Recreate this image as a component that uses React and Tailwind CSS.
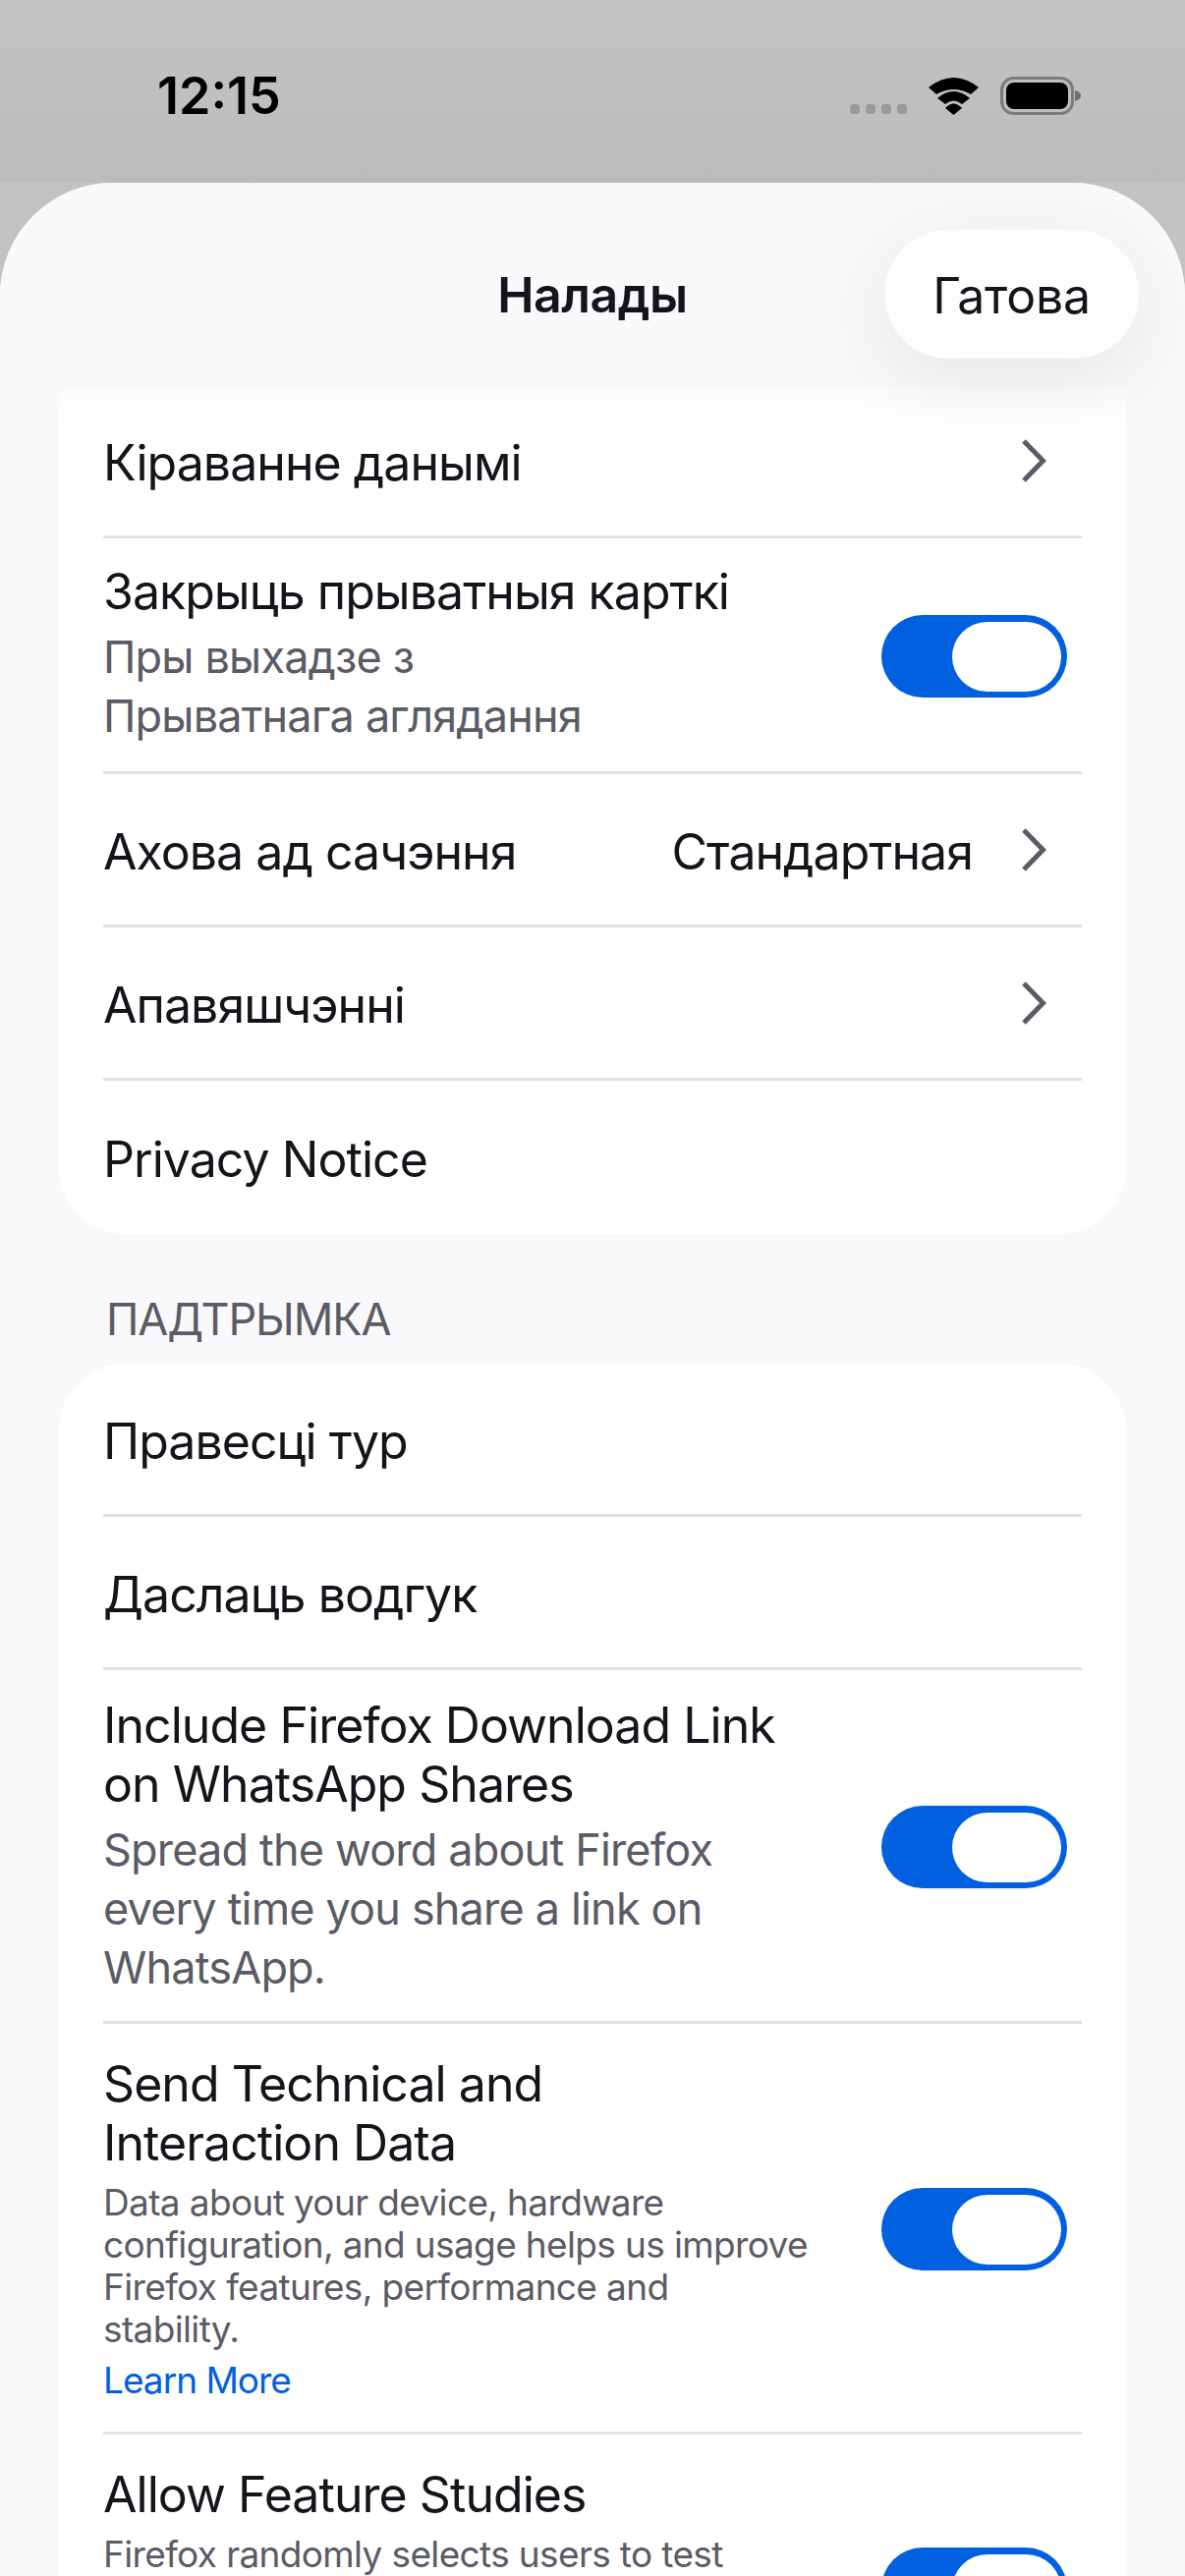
function Toggle() {
  return (
    <div className="shrink-0 w-[189px] h-[84px] rounded-full bg-[#0060df] flex items-center justify-end pr-[6px]">
      <div className="w-[111px] h-[71px] rounded-full bg-white" />
    </div>
  );
}

function Chevron() {
  return (
    <svg className="shrink-0" width="28" height="46" viewBox="0 0 28 46" fill="none">
      <path d="M5 3 L24.5 23 L5 43" stroke="#5b5b66" strokeWidth="5" />
    </svg>
  );
}

function Row({ title, value, chevron, last, className }) {
  return (
    <div className={`ml-[45px] mr-[45px] flex items-center justify-between ${last ? '' : 'border-b-[3px] border-[#e0e0e6]'} ${className || 'h-[156px]'}`}>
      <span className="pt-[4px] text-[50px] leading-[60px] tracking-[-0.95px] text-[#15141a]">{title}</span>
      <div className="flex items-center gap-[47px] pr-[36px]">
        {value && <span className="pt-[4px] text-[50px] leading-[60px] tracking-[-0.95px] text-[#15141a]">{value}</span>}
        {chevron && <Chevron />}
      </div>
    </div>
  );
}

function ToggleRow({ title, sub, small, link, h, pt, togglePos, clip }) {
  return (
    <div className={`ml-[45px] mr-[45px] flex justify-between ${clip ? '' : 'border-b-[3px] border-[#e0e0e6]'} ${h} ${pt}`}>
      <div className="w-[760px]">
        <div className="text-[50px] leading-[60px] tracking-[-0.95px] text-[#15141a]">{title}</div>
        {small ? (
          <div className="mt-[9px] text-[37px] leading-[43px] tracking-[-0.64px] text-[#5b5b66]">{sub}</div>
        ) : (
          <div className="mt-[7px] text-[45px] leading-[60px] tracking-[-0.82px] text-[#5b5b66]">{sub}</div>
        )}
        {link && <div className="mt-[9px] text-[37px] leading-[43px] tracking-[-1px] text-[#0060df]">{link}</div>}
      </div>
      <div className={`mr-[15px] ${togglePos}`}>
        <Toggle />
      </div>
    </div>
  );
}

export default function App() {
  return (
    <div className="relative w-[1206px] h-[2622px] overflow-hidden bg-[#c2c2c4] font-['Inter','Liberation_Sans',sans-serif]">
      {/* status bar */}
      <div className="h-[186px] px-[160px] pt-[67px] flex justify-between bg-gradient-to-b from-[#c3c3c5] to-[#bcbcbe]">
        <span className="text-[52px] leading-[62px] font-semibold text-black">12:15</span>
        <svg className="mr-[-59px] mt-[9px]" width="240" height="44" viewBox="0 0 240 44">
          <g fill="#9a9a9c">
            <rect x="0" y="30" width="10" height="10" rx="3.5" />
            <rect x="16" y="30" width="10" height="10" rx="3.5" />
            <rect x="32" y="30" width="10" height="10" rx="3.5" />
            <rect x="48" y="30" width="10" height="10" rx="3.5" />
          </g>
          <path d="M80 13 Q105.5 -7 131 13 L123 20 Q105.5 10 88 20 Z" fill="#000" />
          <path d="M89 24 Q105.5 10 122 24 L114 30 Q105.5 23 97 30 Z" fill="#000" />
          <path d="M97 34 Q105.5 25 114 34 L105.5 41 Z" fill="#000" />
          <rect x="154.5" y="3.5" width="72" height="36" rx="12" fill="none" stroke="#7c7c7e" strokeWidth="3" />
          <rect x="159" y="8" width="63" height="27" rx="8" fill="#000" />
          <path d="M229 16 C233 17 235 19 235 21.5 C235 24 233 26 229 27 Z" fill="#6f6f71" />
        </svg>
      </div>

      {/* sheet */}
      <div className="relative h-[2436px] rounded-t-[115px] bg-[#f9f9fb] overflow-hidden">
        <div className="absolute top-0 left-0 right-0 h-[210px] z-10 bg-[#f9f9fb] flex items-center justify-center pt-[18px]">
          <div className="absolute top-full left-0 right-0 h-[40px] bg-gradient-to-b from-[#f9f9fb99] to-[#f9f9fb00]" />
          <span className="text-[50px] leading-[60px] font-semibold tracking-[-0.5px] text-[#15141a]">Налады</span>
          <div className="absolute right-[47px] top-[48px] w-[259px] h-[131px] rounded-full bg-[#fdfdfe] shadow-[0_20px_80px_rgba(0,0,0,0.08)] flex items-center justify-center">
            <span className="pt-[2px] text-[50px] leading-[60px] tracking-[-0.3px] text-[#15141a]">Гатова</span>
          </div>
        </div>

        <div className="pt-[210px] px-[60px]">
          <div className="bg-white rounded-b-[68px] w-[1086px]">
            <Row title="Кіраванне данымі" chevron className="h-[152px] pb-[3px]" />
            <ToggleRow
              title="Закрыць прыватныя карткі"
              sub={<>Пры выхадзе з<br />Прыватнага аглядання</>}
              h="h-[240px]"
              pt="pt-[24px]"
              togglePos="mt-[54px]"
            />
            <Row title="Ахова ад сачэння" value="Стандартная" chevron />
            <Row title="Апавяшчэнні" chevron />
            <Row title="Privacy Notice" last />
          </div>

          <div className="h-[132px] pl-[48px] pt-[60px] text-[45px] leading-[54px] tracking-[-1.1px] text-[#5b5b66]">ПАДТРЫМКА</div>

          <div className="bg-white rounded-[68px] w-[1086px] h-[1300px]">
            <Row title="Правесці тур" />
            <Row title="Даслаць водгук" />
            <ToggleRow
              title={<>Include Firefox Download Link<br />on WhatsApp Shares</>}
              sub={<>Spread the word about Firefox<br />every time you share a link on<br />WhatsApp.</>}
              h="h-[360px]"
              pt="pt-[26px]"
              togglePos="mt-[112px]"
            />
            <ToggleRow
              title={<>Send Technical and<br />Interaction Data</>}
              sub={<>Data about your device, hardware<br />configuration, and usage helps us improve<br />Firefox features, performance and<br />stability.</>}
              small
              link="Learn More"
              h="h-[418px]"
              pt="pt-[31px]"
              togglePos="mt-[136px]"
            />
            <ToggleRow
              clip
              title="Allow Feature Studies"
              sub="Firefox randomly selects users to test"
              small
              h="h-[200px]"
              pt="pt-[31px]"
              togglePos="mt-[84px]"
            />
          </div>
        </div>
      </div>
    </div>
  );
}
